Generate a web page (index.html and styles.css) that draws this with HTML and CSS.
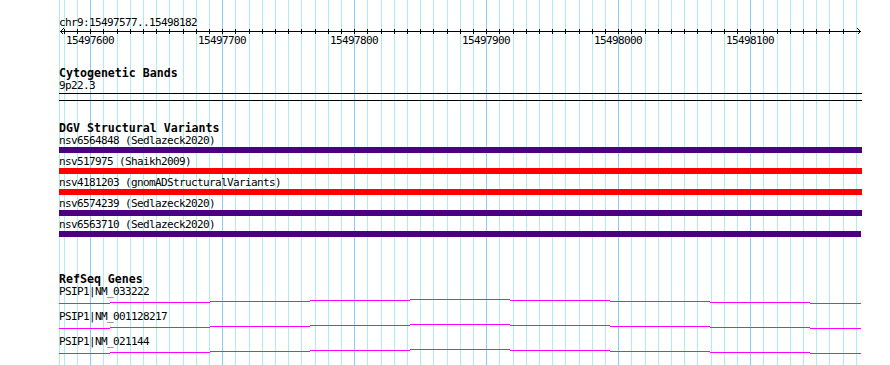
FILE: index.html
```html
<!DOCTYPE html>
<html lang="en">
<head>
<meta charset="utf-8">
<title>Genome browser – chr9:15497577..15498182</title>
<link rel="stylesheet" href="styles.css">
</head>
<body>
<div class="browser">
  <svg class="grid" width="890" height="365" viewBox="0 0 890 365" aria-hidden="true">
    <path class="grid-minor" d="M59.5 0v365M64.5 0v365M77.5 0v365M103.5 0v365M117.5 0v365M130.5 0v365M143.5 0v365M156.5 0v365M169.5 0v365M183.5 0v365M196.5 0v365M209.5 0v365M235.5 0v365M249.5 0v365M262.5 0v365M275.5 0v365M288.5 0v365M301.5 0v365M315.5 0v365M328.5 0v365M341.5 0v365M367.5 0v365M381.5 0v365M394.5 0v365M407.5 0v365M420.5 0v365M433.5 0v365M447.5 0v365M460.5 0v365M473.5 0v365M499.5 0v365M513.5 0v365M526.5 0v365M539.5 0v365M552.5 0v365M565.5 0v365M579.5 0v365M592.5 0v365M605.5 0v365M631.5 0v365M645.5 0v365M658.5 0v365M671.5 0v365M684.5 0v365M697.5 0v365M711.5 0v365M724.5 0v365M737.5 0v365M763.5 0v365M777.5 0v365M790.5 0v365M803.5 0v365M816.5 0v365M829.5 0v365M843.5 0v365M856.5 0v365"/>
    <path class="grid-major" d="M90.5 0v365M222.5 0v365M354.5 0v365M486.5 0v365M618.5 0v365M750.5 0v365"/>
  </svg>

  <div class="tracks">
    <section class="ruler">
      <div class="ruler-label">chr9:15497577..15498182</div>
      <svg class="axis" width="803" height="24" viewBox="0 0 803 24">
        <path class="axis-line" d="M1 5.5H802M4.5 2.5L1.5 5.5L4.5 8.5M798.5 2.5L801.5 5.5L798.5 8.5"/>
        <path class="axis-ticks" d="M5.5 3v5M18.5 3v5M31.5 3v5M44.5 3v5M58.5 3v5M71.5 3v5M84.5 3v5M97.5 3v5M110.5 3v5M124.5 3v5M137.5 3v5M150.5 3v5M163.5 3v5M176.5 3v5M190.5 3v5M203.5 3v5M216.5 3v5M229.5 3v5M242.5 3v5M256.5 3v5M269.5 3v5M282.5 3v5M295.5 3v5M308.5 3v5M322.5 3v5M335.5 3v5M348.5 3v5M361.5 3v5M374.5 3v5M388.5 3v5M401.5 3v5M414.5 3v5M427.5 3v5M440.5 3v5M454.5 3v5M467.5 3v5M480.5 3v5M493.5 3v5M506.5 3v5M520.5 3v5M533.5 3v5M546.5 3v5M559.5 3v5M572.5 3v5M586.5 3v5M599.5 3v5M612.5 3v5M625.5 3v5M638.5 3v5M652.5 3v5M665.5 3v5M678.5 3v5M691.5 3v5M704.5 3v5M718.5 3v5M731.5 3v5M744.5 3v5M757.5 3v5M770.5 3v5M784.5 3v5"/>
        <text class="tick-label" x="31" y="18">15497600</text>
        <text class="tick-label" x="163" y="18">15497700</text>
        <text class="tick-label" x="295" y="18">15497800</text>
        <text class="tick-label" x="427" y="18">15497900</text>
        <text class="tick-label" x="559" y="18">15498000</text>
        <text class="tick-label" x="691" y="18">15498100</text>
      </svg>
    </section>

    <section class="track track-cyto">
      <h2 class="track-title">Cytogenetic Bands</h2>
      <div class="feature-label">9p22.3</div>
      <div class="band"></div>
    </section>

    <section class="track track-dgv">
      <h2 class="track-title">DGV Structural Variants</h2>
      <div class="feature">
        <div class="feature-label">nsv6564848 (Sedlazeck2020)</div>
        <div class="bar bar-loss"></div>
      </div>
      <div class="feature">
        <div class="feature-label">nsv517975 (Shaikh2009)</div>
        <div class="bar bar-gain"></div>
      </div>
      <div class="feature">
        <div class="feature-label">nsv4181203 (gnomADStructuralVariants)</div>
        <div class="bar bar-gain"></div>
      </div>
      <div class="feature">
        <div class="feature-label">nsv6574239 (Sedlazeck2020)</div>
        <div class="bar bar-loss"></div>
      </div>
      <div class="feature">
        <div class="feature-label">nsv6563710 (Sedlazeck2020)</div>
        <div class="bar bar-loss bar-short"></div>
      </div>
    </section>

    <section class="track track-genes">
      <h2 class="track-title">RefSeq Genes</h2>
      <div class="gene">
        <div class="feature-label">PSIP1|NM_033222</div>
        <svg class="gene-line" width="802" height="7" viewBox="0 0 802 7"><path d="M0 5.5H51M51 4.5H151M151 3.5H251M251 2.5H351M351 1.5H451M451 2.5H551M551 3.5H651M651 4.5H751M751 5.5H802"/></svg>
      </div>
      <div class="gene">
        <div class="feature-label">PSIP1|NM_001128217</div>
        <svg class="gene-line" width="802" height="7" viewBox="0 0 802 7"><path d="M0 5.5H51M51 4.5H151M151 3.5H251M251 2.5H351M351 1.5H451M451 2.5H551M551 3.5H651M651 4.5H751M751 5.5H802"/></svg>
      </div>
      <div class="gene">
        <div class="feature-label">PSIP1|NM_021144</div>
        <svg class="gene-line" width="802" height="7" viewBox="0 0 802 7"><path d="M0 5.5H51M51 4.5H151M151 3.5H251M251 2.5H351M351 1.5H451M451 2.5H551M551 3.5H651M651 4.5H751M751 5.5H802"/></svg>
      </div>
    </section>
  </div>
</div>
</body>
</html>
```

FILE: styles.css
```css
html, body {
  margin: 0;
  padding: 0;
  background: #ffffff;
}

.browser {
  position: relative;
  width: 890px;
  height: 365px;
  overflow: hidden;
  background: #ffffff;
  font-family: "DejaVu Sans Mono", "Liberation Mono", monospace;
  color: #000000;
}

.grid {
  position: absolute;
  left: 0;
  top: 0;
  display: block;
}

.grid path {
  fill: none;
  stroke-width: 1;
  shape-rendering: crispEdges;
}

.grid-minor { stroke: #afeeee; }
.grid-major { stroke: #87cefa; }

.tracks {
  position: relative;
  display: flex;
  flex-direction: column;
  padding: 16px 0 0 59px;
}

.ruler {
  display: flex;
  flex-direction: column;
}

.ruler-label,
.feature-label {
  font-size: 11px;
  letter-spacing: -0.62px;
  line-height: 13px;
  height: 13px;
  white-space: nowrap;
}

.axis {
  display: block;
  margin-top: -3px;
  overflow: visible;
}

.axis-line,
.axis-ticks {
  fill: none;
  stroke: #000000;
  stroke-width: 1;
  shape-rendering: crispEdges;
}

.tick-label {
  font-family: "DejaVu Sans Mono", "Liberation Mono", monospace;
  font-size: 11px;
  letter-spacing: -0.62px;
  text-anchor: middle;
  fill: #000000;
}

.track {
  display: flex;
  flex-direction: column;
}

.track-title {
  margin: 0;
  font-size: 11.6px;
  font-weight: bold;
  line-height: 12px;
  height: 12px;
  white-space: nowrap;
}

.track-cyto { margin-top: 17px; }
.track-dgv { margin-top: 21px; }
.track-genes { margin-top: 36px; }

.band {
  margin-top: 1px;
  width: 803px;
  height: 6px;
  border-top: 1px solid #000000;
  border-bottom: 1px solid #000000;
}

.feature {
  display: flex;
  flex-direction: column;
}

.feature + .feature { margin-top: 2px; }

.bar {
  width: 803px;
  height: 6px;
}

.bar-short { width: 802px; }
.bar-loss { background: #4b0082; }
.bar-gain { background: #ff0000; }

.gene {
  display: flex;
  flex-direction: column;
}

.gene + .gene { margin-top: 5px; }

.gene-line {
  display: block;
}

.gene-line path {
  fill: none;
  stroke: #ff00ff;
  stroke-width: 1;
  shape-rendering: crispEdges;
}
```
